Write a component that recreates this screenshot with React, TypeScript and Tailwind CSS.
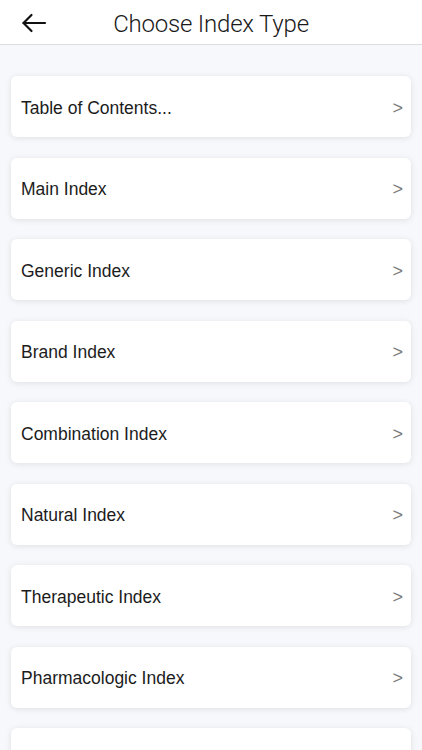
import React from "react";

const items = [
  "Table of Contents...",
  "Main Index",
  "Generic Index",
  "Brand Index",
  "Combination Index",
  "Natural Index",
  "Therapeutic Index",
  "Pharmacologic Index",
  "",
];

export default function App() {
  return (
    <div className="w-[422px] h-[750px] overflow-hidden bg-[#f7f8fb] flex flex-col" style={{ fontFamily: '"Liberation Sans", Arial, sans-serif' }}>
      <div className="h-[45px] shrink-0 bg-white border-b border-[#dcdde0] flex items-center relative">
        <div className="absolute left-[21px] top-[12px] w-[26px] h-[22px] flex items-center justify-center">
          <svg width="26" height="20" viewBox="0 0 26 20" fill="none" stroke="#111" strokeWidth="2.2" strokeLinecap="round" strokeLinejoin="round">
            <path d="M24 10H2.5" />
            <path d="M10.5 2L2.5 10L10.5 18" />
          </svg>
        </div>
        <div className="flex-1 text-center text-[24px] font-light text-[#1a1a1a] tracking-[-0.2px] pt-[3px]" style={{ fontFamily: 'Roboto, "Liberation Sans", sans-serif' }}>
          Choose Index Type
        </div>
      </div>
      <div className="flex flex-col gap-[20.5px] px-[11px] pt-[31px]">
        {items.map((t, i) => (
          <div key={i} className="h-[61px] shrink-0 bg-white rounded-[6px] shadow-[0_1px_6px_rgba(0,0,0,0.10)] flex items-center justify-between pl-[10px] pr-[8px] pt-[3px]">
            <span className="text-[17.5px] text-[#1c1c1c]">{t}</span>
            {t && <span className="text-[18px] text-[#7a7a7a]">&gt;</span>}
          </div>
        ))}
      </div>
    </div>
  );
}
